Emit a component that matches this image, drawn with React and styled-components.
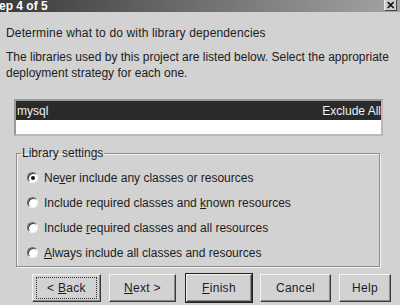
import React from 'react';
import styled, { createGlobalStyle, css } from 'styled-components';

const GlobalStyle = createGlobalStyle`
  body {
    margin: 0;
    background: #d2d2d2;
    font-family: "Liberation Sans", Arial, sans-serif;
  }
`;

const Window = styled.div`
  width: 400px;
  height: 305px;
  overflow: hidden;
  display: flex;
  flex-direction: column;
  background: #d2d2d2;
  color: #1c1c1c;
`;

const TitleBar = styled.div`
  height: 12px;
  flex: none;
  display: flex;
  align-items: center;
  justify-content: space-between;
  background: linear-gradient(90deg, #3a3a3a 0%, #6a6a6a 45%, #a4a4a4 100%);
  overflow: hidden;
`;

const TitleText = styled.span`
  margin-left: -13px;
  color: #fff;
  font-weight: bold;
  font-size: 12px;
  line-height: 12px;
  white-space: nowrap;
`;

const CloseButton = styled.div`
  width: 13px;
  height: 11px;
  margin-right: 3px;
  align-self: flex-start;
  display: flex;
  align-items: center;
  justify-content: center;
  background: #cfcfcf;
  border-right: 1px solid #444;
  border-bottom: 1px solid #444;
  border-left: 1px solid #f0f0f0;
  box-sizing: border-box;
  font-size: 11px;
  font-weight: bold;
  color: #111;
`;

const Content = styled.div`
  display: flex;
  flex-direction: column;
  padding: 0 0 0 6px;
`;

const Heading = styled.div`
  margin-top: 14px;
  font-size: 12px;
  line-height: 14px;
  letter-spacing: 0.15px;
`;

const Description = styled.p`
  margin: 9px 0 0;
  width: 390px;
  font-size: 12px;
  line-height: 16px;
`;

const ListBox = styled.div`
  margin: 18px 0 0 8px;
  width: 369px;
  height: 37px;
  box-sizing: border-box;
  background: #fff;
  border: 2px solid #b8b8b8;
  border-top-color: #9a9a9a;
  border-left-color: #9a9a9a;
`;

const ListRow = styled.div`
  height: 19px;
  display: flex;
  align-items: center;
  justify-content: space-between;
  padding: 0 0 0 1px;
  font-size: 12px;
  ${({ $selected }) =>
    $selected &&
    css`
      background: #2a2a2a;
      color: #f0f0f0;
    `}
`;

const GroupBox = styled.fieldset`
  margin: 10px 0 0 10px;
  width: 364px;
  box-sizing: border-box;
  padding: 5px 0 1px 10px;
  border: 1px solid #8e8e8e;
  box-shadow: inset 1px 1px 0 #f2f2f2, 1px 1px 0 #f2f2f2;
`;

const Legend = styled.legend`
  padding: 0 1px;
  margin-left: -6px;
  font-size: 12px;
  line-height: 14px;
`;

const RadioRow = styled.label`
  height: 25px;
  display: flex;
  align-items: center;
  gap: 6px;
  font-size: 12px;
`;

const RadioCircle = styled.span`
  width: 11px;
  height: 11px;
  flex: none;
  box-sizing: border-box;
  border-radius: 50%;
  background: #fff;
  border: 1px solid;
  border-color: #6a6a6a #f4f4f4 #f4f4f4 #6a6a6a;
  box-shadow: inset 1px 1px 0 #3a3a3a;
  display: flex;
  align-items: center;
  justify-content: center;

  &::after {
    content: '';
    width: 4px;
    height: 4px;
    border-radius: 50%;
    background: ${({ $checked }) => ($checked ? '#111' : 'transparent')};
  }
`;

const ButtonRow = styled.div`
  display: flex;
  gap: 8px;
  margin: 7px 0 0 26px;
`;

const Button = styled.button`
  width: ${({ $width }) => $width}px;
  height: 28px;
  box-sizing: border-box;
  padding: 0;
  background: #d2d2d2;
  font-family: inherit;
  font-size: 12px;
  letter-spacing: 0.3px;
  color: #1c1c1c;
  border: 1px solid;
  border-color: #f4f4f4 #3a3a3a #3a3a3a #f4f4f4;
  box-shadow: inset -1px -1px 0 #8a8a8a;
  display: flex;
  align-items: center;
  justify-content: center;
  ${({ $default }) =>
    $default &&
    css`
      outline: 1px solid #222;
    `}
  ${({ $focused }) =>
    $focused &&
    css`
      & > span {
        outline: 1px dotted #333;
        width: 59px;
        height: 20px;
        line-height: 20px;
        text-align: center;
        display: inline-block;
      }
    `}
`;

const options = [
  { pre: 'Ne', key: 'v', post: 'er include any classes or resources', checked: true },
  { pre: 'Include required classes and ', key: 'k', post: 'nown resources' },
  { pre: 'Include ', key: 'r', post: 'equired classes and all resources' },
  { pre: '', key: 'A', post: 'lways include all classes and resources' },
];

export default function App() {
  return (
    <>
      <GlobalStyle />
      <Window>
        <TitleBar>
          <TitleText>Step 4 of 5</TitleText>
          <CloseButton>✕</CloseButton>
        </TitleBar>
        <Content>
          <Heading>Determine what to do with library dependencies</Heading>
          <Description>
            The libraries used by this project are listed below. Select the appropriate
            deployment strategy for each one.
          </Description>
          <ListBox>
            <ListRow $selected>
              <span>mysql</span>
              <span>Exclude All</span>
            </ListRow>
          </ListBox>
          <GroupBox>
            <Legend>Library settings</Legend>
            {options.map((o) => (
              <RadioRow key={o.post}>
                <RadioCircle $checked={o.checked} />
                <span>
                  {o.pre}
                  <u>{o.key}</u>
                  {o.post}
                </span>
              </RadioRow>
            ))}
          </GroupBox>
          <ButtonRow>
            <Button $width={69} $focused>
              <span>
                {'< '}
                <u>B</u>ack
              </span>
            </Button>
            <Button $width={67}>
              <span>
                <u>N</u>ext {'>'}
              </span>
            </Button>
            <Button $width={66} $default style={{ marginLeft: 2 }}>
              <span>
                <u>F</u>inish
              </span>
            </Button>
            <Button $width={71}>
              <span>Cancel</span>
            </Button>
            <Button $width={52}>
              <span>Help</span>
            </Button>
          </ButtonRow>
        </Content>
      </Window>
    </>
  );
}
